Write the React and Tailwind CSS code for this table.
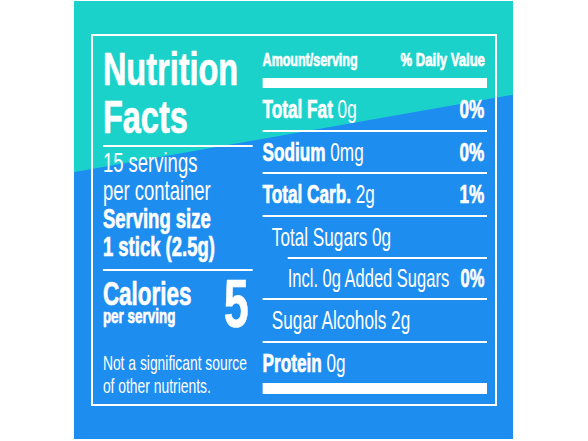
import React from 'react';

// Condensed type: Arial-metric font squeezed horizontally (no condensed face installed)
const font = { fontFamily: '"Liberation Sans", Arial, sans-serif' };
const heavy = 'font-bold [-webkit-text-stroke:0.7px_#fff]';

const rows = [
  { label: 'Total Fat', amount: '0g', dv: '0%', bold: true, h: 'h-[42px] leading-[42px]', size: 'text-[26px]', pad: 'pl-0', line: 'ml-0' },
  { label: 'Sodium', amount: '0mg', dv: '0%', bold: true, h: 'h-[40px] leading-[40px]', size: 'text-[26px]', pad: 'pl-0', line: 'ml-0' },
  { label: 'Total Carb.', amount: '2g', dv: '1%', bold: true, h: 'h-[41px] leading-[41px]', size: 'text-[26px]', pad: 'pl-0', line: 'ml-0' },
  { label: 'Total Sugars 0g', amount: '', dv: '', bold: false, h: 'h-[40px] leading-[40px]', size: 'text-[26px]', pad: 'pl-[14px]', line: 'ml-[38px]' },
  { label: 'Incl. 0g Added Sugars', amount: '', dv: '0%', bold: false, h: 'h-[39px] leading-[39px]', size: 'text-[25px]', pad: 'pl-[38px]', line: 'ml-0' },
  { label: 'Sugar Alcohols 2g', amount: '', dv: '', bold: false, h: 'h-[41px] leading-[41px]', size: 'text-[26px]', pad: 'pl-[14px]', line: 'ml-0' },
];

function Row({ row }) {
  return (
    <div>
      <div className={`${row.h} ${row.size} ${row.pad} flex items-center justify-between whitespace-nowrap`}>
        <span>
          <span className={row.bold ? heavy : 'font-normal'}>{row.label}</span>
          {row.amount && <span className="font-normal"> {row.amount}</span>}
        </span>
        {row.dv && <span className={`${heavy} pr-[4px]`}>{row.dv}</span>}
      </div>
      <div className={`h-[2px] bg-white ${row.line}`} />
    </div>
  );
}

export default function App() {
  return (
    <div className="w-[588px] h-[441px] bg-white pt-[1px] pl-[74px] overflow-hidden" style={font}>
      <div className="w-[439px] h-[438px] pl-[17px] pr-[16px] py-[33px] text-white bg-[linear-gradient(170deg,#1bd2cb_168px,#1d8df0_169px)]">
        <div className="h-full border-2 border-white">
          <div className="w-[608px] h-full origin-top-left scale-x-[0.66] flex pl-[15px]">
            <div className="w-[227px] flex flex-col whitespace-nowrap">
              <h1 className={`${heavy} text-[46px] leading-[48px] mt-[9px] origin-left scale-x-[1.07]`}>
                <div>Nutrition</div>
                <div>Facts</div>
              </h1>
              <div className="h-[2px] bg-white mt-[4px]" />
              <div className="text-[28px] leading-[28px] mt-[2px]">
                <div>15 servings</div>
                <div>per container</div>
                <div className={heavy}>Serving size</div>
                <div className={heavy}>1 stick (2.5g)</div>
              </div>
              <div className="h-[2px] bg-white mt-[8px]" />
              <div className="flex justify-between items-start mt-[7px] pr-[6px]">
                <div className={heavy}>
                  <div className="text-[34px] leading-[30px]">Calories</div>
                  <div className="text-[21px] leading-[16px] origin-left scale-x-[0.97]">per serving</div>
                </div>
                <div className={`${heavy} text-[68px] leading-[50px]`}>5</div>
              </div>
              <div className="text-[21px] leading-[23px] mt-[23px]">
                <div>Not a significant source</div>
                <div>of other nutrients.</div>
              </div>
            </div>
            <div className="w-[340px] ml-[15px] flex flex-col">
              <div className={`${heavy} flex justify-between text-[18px] leading-[18px] mt-[15px] whitespace-nowrap`}>
                <span className="origin-left scale-x-[1.05]">Amount/serving</span>
                <span className="origin-right scale-x-[1.1] pr-[3px]">% Daily Value</span>
              </div>
              <div className="h-[10px] bg-white mt-[9px]" />
              {rows.map((r) => (
                <Row key={r.label} row={r} />
              ))}
              <div className="h-[40px] flex items-center text-[26px] leading-[40px] whitespace-nowrap">
                <span className={heavy}>Protein</span>
                <span className="font-normal">&nbsp;0g</span>
              </div>
              <div className="h-[11px] bg-white" />
            </div>
          </div>
        </div>
      </div>
    </div>
  );
}
